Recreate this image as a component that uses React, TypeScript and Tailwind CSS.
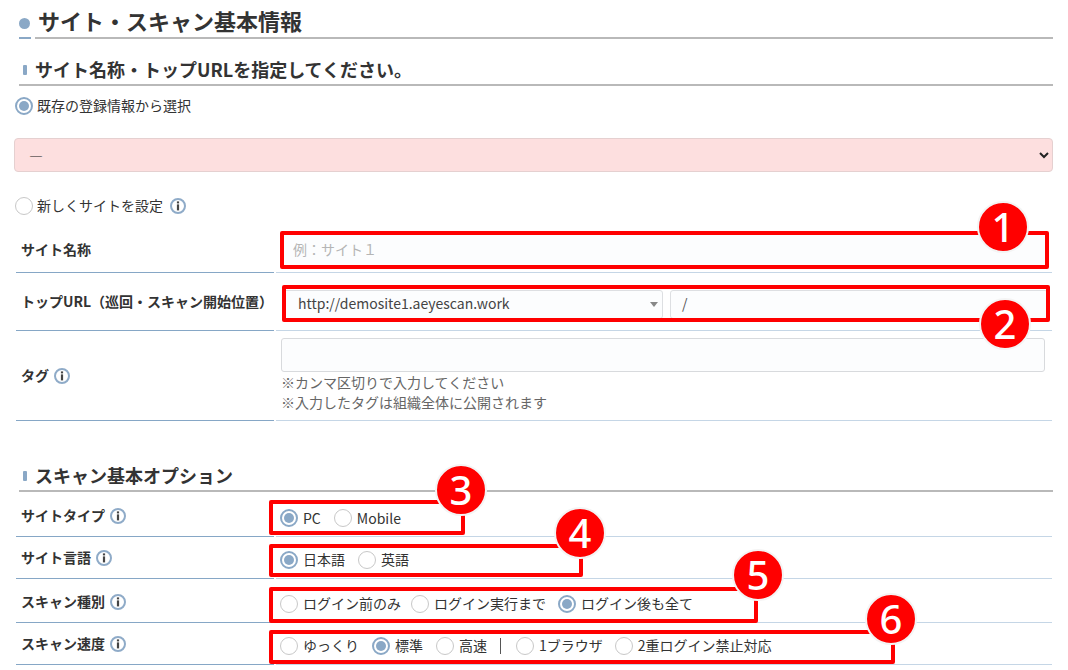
const font = { fontFamily: '"Noto Sans CJK JP", "Noto Sans", sans-serif' };

function InfoIcon() {
  return (
    <svg width="16" height="16" viewBox="0 0 16 16" className="shrink-0">
      <circle cx="8" cy="8" r="7" fill="#fff" stroke="#8fabc8" strokeWidth="2" />
      <rect x="6.9" y="3.4" width="2.2" height="2" fill="#444" />
      <rect x="6.9" y="6.4" width="2.2" height="6" fill="#444" />
    </svg>
  );
}

function Radio({ checked, label, className = 'gap-[5px]' }: { checked?: boolean; label: string; className?: string }) {
  return (
    <label className={`flex items-center ${className}`}>
      {checked ? (
        <span className="w-[18px] h-[18px] rounded-full border-2 border-[#8aa8c6] bg-white flex items-center justify-center shrink-0">
          <span className="w-[10px] h-[10px] rounded-full bg-[#8aa8c6]" />
        </span>
      ) : (
        <span className="w-[18px] h-[18px] rounded-full border border-[#c8c8c8] bg-white shrink-0" />
      )}
      <span className="text-[14px] text-[#333] whitespace-nowrap">{label}</span>
    </label>
  );
}

function Row({ label, info, className, labelPad = '', children }: { label: string; info?: boolean; className: string; labelPad?: string; children: React.ReactNode }) {
  return (
    <div className={`flex ml-[16px] w-[1036px] ${className}`}>
      <div className={`w-[258px] border-b border-[#86a7c6] pl-[5px] flex items-center gap-[5px] shrink-0 ${labelPad}`}>
        <span className="text-[14px] font-bold text-[#333] whitespace-nowrap">{label}</span>
        {info && <InfoIcon />}
      </div>
      <div className="flex-1 ml-[2px] border-b border-[#c5d6e6] min-w-0">{children}</div>
    </div>
  );
}

function OptionRow({ label, className, pad = 'pt-[4px]', labelPad, children }: { label: string; className: string; pad?: string; labelPad?: string; children: React.ReactNode }) {
  return (
    <Row label={label} info className={className} labelPad={labelPad}>
      <div className={`h-full flex items-center gap-[13px] pl-[4px] ${pad}`}>{children}</div>
    </Row>
  );
}

function SectionHeading({ title, className }: { title: string; className: string }) {
  return (
    <div className={`flex items-center ml-[19px] w-[1034px] h-[34px] pt-[3px] border-b-2 border-[#b9b9b9] ${className}`}>
      <span className="w-[4px] h-[10px] ml-[4px] rounded-[1px] bg-[#8aa8c6]" />
      <h2 className="ml-[8px] text-[18px] font-bold text-[#333] whitespace-nowrap">{title}</h2>
    </div>
  );
}

function Callout({ n, box, badge }: { n: string; box: string; badge: string }) {
  return (
    <>
      <div className={`absolute border-[4px] border-[#f00] rounded-[2px] ${box}`} />
      <div
        className={`absolute w-[52px] h-[52px] rounded-full bg-[#f00] border-2 border-[#f4f4f4] flex items-center justify-center text-white text-[40px] font-medium leading-none ${badge}`}
        style={{ fontFamily: '"Noto Sans", sans-serif' }}
      >
        {n}
      </div>
    </>
  );
}

export default function App() {
  return (
    <div className="relative w-[1068px] h-[670px] overflow-hidden bg-white" style={font}>
      {/* page title */}
      <div className="flex ml-[19px] w-[1034px] h-[39px]">
        <div className="w-[12px] border-b-2 border-[#8aa8c6] pt-[18px] shrink-0">
          <span className="block w-[11px] h-[11px] rounded-full bg-[#8aa8c6]" />
        </div>
        <h1 className="flex-1 ml-[4px] pl-[3px] border-b-2 border-[#b9b9b9] text-[22px] leading-[35px] pt-[3px] font-bold text-[#333] whitespace-nowrap overflow-hidden">
          サイト・スキャン基本情報
        </h1>
      </div>

      {/* site name */}
      <SectionHeading title="サイト名称・トップURLを指定してください。" className="mt-[13px]" />
      <Radio checked label="既存の登録情報から選択" className="gap-[4px] ml-[15px] mt-[9px]" />
      <select className="block ml-[14px] mt-[22px] w-[1039px] h-[34px] rounded-[4px] border border-[#e5d0d0] bg-[#fddfdf] pl-[10px] pr-[3px] text-[14px] text-[#222]">
        <option>―</option>
      </select>
      <div className="flex items-center gap-[7px] ml-[15px] mt-[23px]">
        <Radio label="新しくサイトを設定" className="gap-[4px]" />
        <InfoIcon />
      </div>

      <Row label="サイト名称" className="h-[45px] mt-[12px]" labelPad="pb-[2px]">
        <div className="px-[7px] pt-[5px]">
          <input
            placeholder="例：サイト１"
            className="w-full h-[34px] bg-[#fcfdfe] pl-[10px] pb-[2px] text-[14px] rounded-[3px] outline-none placeholder:text-[#b5b5b5]"
          />
        </div>
      </Row>
      <Row label="トップURL（巡回・スキャン開始位置）" className="h-[58px]">
        <div className="flex pl-[7px] pr-[4px] pt-[17px] gap-[7px]">
          <div className="relative w-[380px] h-[29px] bg-[#fcfdfe] border border-[#dddfe2] rounded-[3px] pl-[14px] text-[14px] leading-[24px] text-[#444]">
            http://demosite1.aeyescan.work
            <span className="absolute right-[4px] top-[11px] border-x-[4px] border-x-transparent border-t-[5px] border-t-[#888]" />
          </div>
          <div className="flex-1 h-[29px] bg-[#fcfdfe] border border-[#dddfe2] rounded-[3px] pl-[11px] text-[14px] leading-[24px] text-[#555]">
            /
          </div>
        </div>
      </Row>
      <Row label="タグ" info className="h-[90px]">
        <div className="px-[5px] pt-[7px]">
          <input className="block w-[764px] h-[34px] bg-[#fcfdfe] border border-[#d8dadd] rounded-[3px]" />
          <p className="text-[14px] leading-[20px] text-[#666] whitespace-nowrap">※カンマ区切りで入力してください</p>
          <p className="text-[14px] leading-[20px] text-[#666] whitespace-nowrap">※入力したタグは組織全体に公開されます</p>
        </div>
      </Row>

      {/* scan options */}
      <SectionHeading title="スキャン基本オプション" className="mt-[37px]" />
      <OptionRow label="サイトタイプ" className="h-[45px]" pad="pt-[8px]" labelPad="pt-[3px]">
        <Radio checked label="PC" />
        <Radio label="Mobile" />
      </OptionRow>
      <OptionRow label="サイト言語" className="h-[42px]">
        <Radio checked label="日本語" />
        <Radio label="英語" />
      </OptionRow>
      <OptionRow label="スキャン種別" className="h-[44px]" pad="pt-[6px]" labelPad="pt-[2px]">
        <Radio label="ログイン前のみ" className="gap-[5px] -mr-[3px]" />
        <Radio label="ログイン実行まで" className="gap-[5px] -mr-[1px]" />
        <Radio checked label="ログイン後も全て" />
      </OptionRow>
      <OptionRow label="スキャン速度" className="h-[42px]">
        <Radio label="ゆっくり" />
        <Radio checked label="標準" />
        <Radio label="高速" />
        <span className="w-px h-[16px] bg-[#555] mr-[2px]" />
        <Radio label="1ブラウザ" className="gap-[5px] -mr-[1px]" />
        <Radio label="2重ログイン禁止対応" />
      </OptionRow>

      <Callout n="1" box="left-[280px] top-[231px] w-[769px] h-[38px]" badge="left-[977px] top-[201px]" />
      <Callout n="2" box="left-[282px] top-[285px] w-[768px] h-[37px]" badge="left-[979px] top-[298px]" />
      <Callout n="3" box="left-[269px] top-[500px] w-[196px] h-[35px]" badge="left-[435px] top-[464px]" />
      <Callout n="4" box="left-[269px] top-[544px] w-[314px] h-[33px]" badge="left-[554px] top-[507px]" />
      <Callout n="5" box="left-[269px] top-[587px] w-[489px] h-[36px]" badge="left-[732px] top-[549px]" />
      <Callout n="6" box="left-[269px] top-[630px] w-[626px] h-[34px]" badge="left-[865px] top-[593px]" />
    </div>
  );
}
